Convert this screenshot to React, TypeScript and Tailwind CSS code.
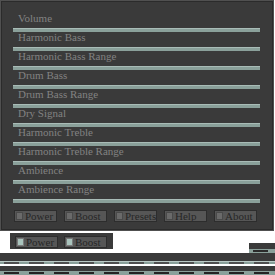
import React from "react";

const labels = [
  "Volume",
  "Harmonic Bass",
  "Harmonic Bass Range",
  "Drum Bass",
  "Drum Bass Range",
  "Dry Signal",
  "Harmonic Treble",
  "Harmonic Treble Range",
  "Ambience",
  "Ambience Range",
];

function Btn({ label, checked }: { label: string; checked?: boolean }) {
  return (
    <div className="w-[43px] h-[12px] border border-[#2d2d2d] bg-[#565656] flex items-center pl-[1px] gap-[2px] overflow-hidden">
      <div
        className={
          checked
            ? "w-[7px] h-[8px] shrink-0 bg-[#a9c4bd] border border-[#7a7a7a]"
            : "w-[7px] h-[8px] shrink-0 bg-[#6a6a6a] border border-[#4a4a4a]"
        }
      />
      <span className="text-[11px] leading-[10px] text-[#262626] whitespace-nowrap">{label}</span>
    </div>
  );
}

function Dashes({ color }: { color: string }) {
  const items = Array.from({ length: 11 });
  return (
    <div className="flex pl-[4px] gap-[10px]">
      {items.map((_, i) => (
        <div key={i} className={"w-[15px] h-[2px] shrink-0 " + color} />
      ))}
    </div>
  );
}

export default function App() {
  return (
    <div className="w-[275px] h-[275px] bg-white overflow-hidden font-['Liberation_Serif',serif]">
      <div className="w-[274px] border border-[#505050] bg-[#3a3a3a]">
        <div className="h-[229px] border border-[#2b2b2b] pt-[11px] pl-[11px]">
          {labels.map((l) => (
            <div key={l} className="flex flex-col">
              <div className="h-[11px] leading-[11px] text-[11px] text-[#828282] pl-[5px] whitespace-nowrap">{l}</div>
              <div className="mt-[4px] w-[247px] h-[4px] bg-[#8aa09a] border-t border-[#a9bcb7]" />
            </div>
          ))}
          <div className="mt-[7px] flex gap-[7px] pl-[1px]">
            <Btn label="Power" />
            <Btn label="Boost" />
            <Btn label="Presets" />
            <Btn label="Help" />
            <Btn label="About" />
          </div>
        </div>
      </div>
      <div className="mt-[2px] flex justify-between h-[20px]">
        <div className="ml-[10px] w-[103px] h-[16px] bg-[#3a3a3a] flex items-start pt-[3px] pl-[5px] gap-[6px]">
          <Btn label="Power" checked />
          <Btn label="Boost" checked />
        </div>
        <div className="self-end w-[26px] flex flex-col">
          <div className="h-[6px] bg-[#3a3a3a]" />
          <div className="h-[4px] bg-[#8aa09a] pl-[4px] pt-[1px]">
            <div className="w-[15px] h-[2px] bg-[#2a2a2a]" />
          </div>
        </div>
      </div>
      <div className="h-[8px] bg-[#3a3a3a]" />
      <div className="h-[3px] bg-[#8aa09a] border-t border-[#b9c9c5]">
        <Dashes color="bg-[#4f4f4f]" />
      </div>
      <div className="h-[2px] bg-white" />
      <div className="h-[5px] bg-[#3a3a3a]" />
      <div className="h-[4px] bg-[#8aa09a] pt-[1px]">
        <Dashes color="bg-[#232323]" />
      </div>
    </div>
  );
}
